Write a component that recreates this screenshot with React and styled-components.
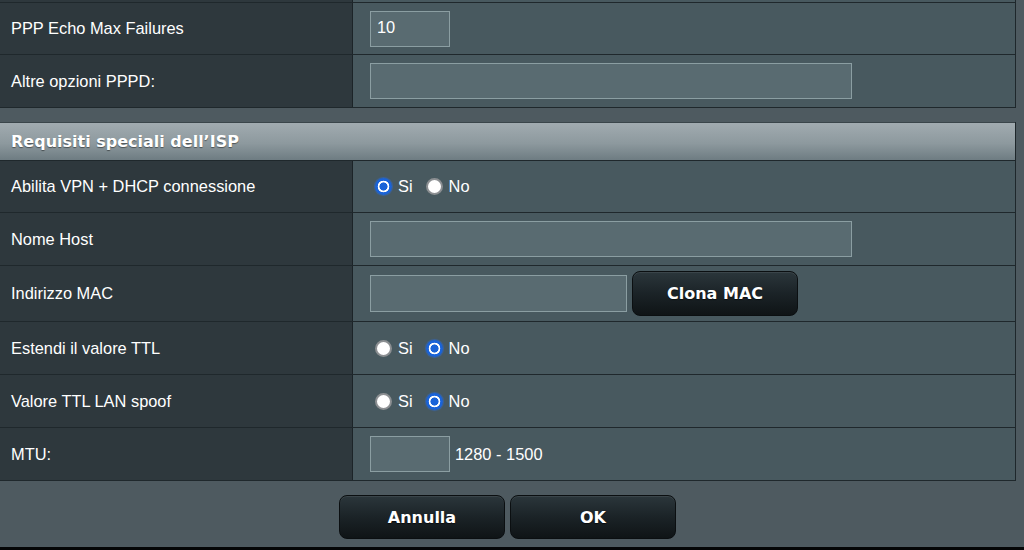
import React from "react";
import styled, { createGlobalStyle } from "styled-components";

const Global = createGlobalStyle`
  html, body { margin: 0; padding: 0; }
  body {
    background: #4e5a60;
    font-family: "Liberation Sans", Arial, sans-serif;
    overflow: hidden;
  }
`;

const Page = styled.div`
  width: 1024px;
  height: 550px;
  overflow: hidden;
  background: #4e5a60;
  border-bottom: 3px solid #050607;
  box-sizing: border-box;
`;

const Table = styled.div`
  width: 1016px;
  box-sizing: border-box;
  border-right: 1px solid #1e272b;
  margin-top: ${(p) => p.$top || 0}px;
`;

const Row = styled.div`
  display: grid;
  grid-template-columns: 353px 1fr;
  height: ${(p) => p.$h}px;
  border-bottom: 1px solid #1f282c;
  box-sizing: border-box;
`;

const Label = styled.div`
  background: #2e383d;
  border-right: 1px solid #1c2428;
  color: #ffffff;
  font-size: 16.4px;
  display: flex;
  align-items: center;
  padding-left: 11px;
`;

const Cell = styled.div`
  background: #48595f;
  display: flex;
  align-items: center;
  padding-left: 17px;
  gap: 5px;
  color: #ffffff;
  font-size: 16.4px;
`;

const Input = styled.input`
  box-sizing: border-box;
  width: ${(p) => p.$w}px;
  height: ${(p) => p.$h || 36}px;
  background: #596b71;
  border: 1px solid #8b9ea2;
  color: #ffffff;
  font-family: "Liberation Sans", Arial, sans-serif;
  font-size: 16.4px;
  padding: 0 0 2px 6px;
  outline: none;
  margin: 0;
`;

const Gap = styled.div`
  height: 14px;
`;

const Header = styled.div`
  height: 39px;
  box-sizing: border-box;
  border-top: 1px solid #3a454a;
  border-bottom: 1px solid #1f282c;
  background: linear-gradient(#a1abb0 0%, #8d999e 55%, #6e7c82 100%);
  display: flex;
  align-items: center;
  padding-left: 11px;
  color: #ffffff;
  font-family: "DejaVu Sans", Verdana, sans-serif;
  font-weight: bold;
  font-size: 16px;
  text-shadow: 0 1px 1px rgba(0, 0, 0, 0.45);
`;

const RadioGroup = styled.label`
  display: inline-flex;
  align-items: center;
  margin-right: 3px;
  gap: 6px;
`;

const Radio = styled.input`
  appearance: none;
  -webkit-appearance: none;
  box-sizing: border-box;
  width: 17px;
  height: 17px;
  margin: 0 0 0 5px;
  border-radius: 50%;
  background: #ffffff;
  border: 2px solid #8c8f92;
  &:checked {
    border: none;
    background: radial-gradient(
      circle,
      #1a63d8 0 3.8px,
      #ffffff 4.3px 5.6px,
      #1a63d8 6.1px
    );
    box-shadow: 0 0 1px 1px rgba(40, 110, 230, 0.45);
  }
`;

const Button = styled.button`
  width: ${(p) => p.$w || 166}px;
  height: ${(p) => p.$h || 44}px;
  border-radius: 8px;
  border: 1px solid #0b0f11;
  background: linear-gradient(#2b363b 0%, #1b2327 50%, #0f1416 100%);
  color: #ffffff;
  font-family: "DejaVu Sans", Verdana, sans-serif;
  font-weight: bold;
  font-size: 16px;
  text-shadow: 0 1px 1px rgba(0, 0, 0, 0.6);
  box-shadow: inset 0 1px 0 rgba(255, 255, 255, 0.08);
  cursor: pointer;
  padding: 0;
`;

const ButtonBar = styled.div`
  width: 1015px;
  display: flex;
  justify-content: center;
  gap: 5px;
  padding-top: 14px;
  box-sizing: border-box;
`;

const Hint = styled.span`
  margin-left: 0;
`;

function YesNo({ name, yes }) {
  return (
    <>
      <RadioGroup>
        <Radio type="radio" name={name} defaultChecked={yes} />
        Si
      </RadioGroup>
      <RadioGroup>
        <Radio type="radio" name={name} defaultChecked={!yes} />
        No
      </RadioGroup>
    </>
  );
}

export default function App() {
  return (
    <Page>
      <Global />
      <Table $top={-50}>
        <Row $h={53}>
          <Label />
          <Cell />
        </Row>
        <Row $h={52}>
          <Label>PPP Echo Max Failures</Label>
          <Cell>
            <Input $w={80} defaultValue="10" />
          </Cell>
        </Row>
        <Row $h={53}>
          <Label>Altre opzioni PPPD:</Label>
          <Cell>
            <Input $w={482} />
          </Cell>
        </Row>
      </Table>
      <Gap />
      <Table>
        <Header>Requisiti speciali dell’ISP</Header>
        <Row $h={52}>
          <Label>Abilita VPN + DHCP connessione</Label>
          <Cell>
            <YesNo name="vpn" yes />
          </Cell>
        </Row>
        <Row $h={53}>
          <Label>Nome Host</Label>
          <Cell>
            <Input $w={482} />
          </Cell>
        </Row>
        <Row $h={56}>
          <Label>Indirizzo MAC</Label>
          <Cell>
            <Input $w={257} $h={37} />
            <Button $w={166} $h={45}>Clona MAC</Button>
          </Cell>
        </Row>
        <Row $h={53}>
          <Label>Estendi il valore TTL</Label>
          <Cell>
            <YesNo name="ttl" />
          </Cell>
        </Row>
        <Row $h={53}>
          <Label>Valore TTL LAN spoof</Label>
          <Cell>
            <YesNo name="spoof" />
          </Cell>
        </Row>
        <Row $h={53}>
          <Label>MTU:</Label>
          <Cell>
            <Input $w={80} />
            <Hint>1280 - 1500</Hint>
          </Cell>
        </Row>
      </Table>
      <ButtonBar>
        <Button>Annulla</Button>
        <Button>OK</Button>
      </ButtonBar>
    </Page>
  );
}
